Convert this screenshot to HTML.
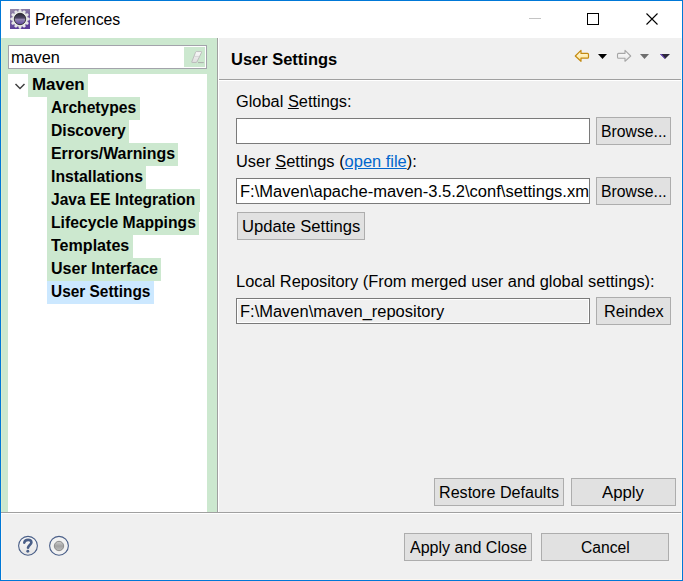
<!DOCTYPE html>
<html><head><meta charset="utf-8">
<style>
*{margin:0;padding:0;box-sizing:border-box}
html,body{width:683px;height:581px;overflow:hidden;background:#fff}
body{position:relative;font-family:"Liberation Sans",sans-serif;color:#000}
.a{position:absolute}
.t{position:absolute;white-space:pre;line-height:16px;font-size:16px;transform-origin:0 0}
.b{font-weight:bold}
.btn{position:absolute;background:#e1e1e1;border:1px solid #adadad;height:28px}
.fld{position:absolute;background:#fff;border:1px solid #7a7a7a;height:26px;width:354px;left:236px;overflow:hidden}
.hl{position:absolute;background:#cce8cf;height:23px}
.lnk{color:#0066cc;text-decoration:underline}
u{text-decoration:underline}
</style></head><body>
<!-- window border -->
<div class="a" style="left:0;top:0;width:683px;height:581px;border:1px solid #0078d7"></div>
<!-- title bar -->
<div class="a" style="left:1px;top:1px;width:681px;height:37px;background:#fff"></div>
<svg class="a" style="left:10px;top:9px" width="20" height="20" viewBox="0 0 20 20">
  <defs><linearGradient id="ig" x1="0" y1="0" x2="0.3" y2="1"><stop offset="0" stop-color="#988ca8"/><stop offset="0.5" stop-color="#7864a0"/><stop offset="1" stop-color="#5b3c98"/></linearGradient>
  <linearGradient id="ic" x1="0" y1="0" x2="0" y2="1"><stop offset="0" stop-color="#2c2838"/><stop offset="0.42" stop-color="#4e4664"/><stop offset="0.52" stop-color="#9488b0"/><stop offset="1" stop-color="#5e44a0"/></linearGradient></defs>
  <rect x="0" y="0" width="20" height="20" fill="url(#ig)"/>
  <polygon points="8.99,0.35 11.01,0.35 11.89,2.95 13.95,1.14 15.70,2.15 15.16,4.84 17.85,4.30 18.86,6.05 17.05,8.11 19.65,8.99 19.65,11.01 17.05,11.89 18.86,13.95 17.85,15.70 15.16,15.16 15.70,17.85 13.95,18.86 11.89,17.05 11.01,19.65 8.99,19.65 8.11,17.05 6.05,18.86 4.30,17.85 4.84,15.16 2.15,15.70 1.14,13.95 2.95,11.89 0.35,11.01 0.35,8.99 2.95,8.11 1.14,6.05 2.15,4.30 4.84,4.84 4.30,2.15 6.05,1.14 8.11,2.95" fill="#e6e6e6"/>
  <circle cx="10" cy="10" r="5.7" fill="url(#ic)" stroke="#1e1e1e" stroke-width="0.8"/>
</svg>
<div class="t" style="left:35.01px;top:12px;transform:scaleX(0.9882)">Preferences</div>
<!-- window controls -->
<div class="a" style="left:529px;top:18px;width:12px;height:1px;background:#c4c4c4"></div>
<div class="a" style="left:587px;top:13px;width:12px;height:12px;border:1px solid #000"></div>
<svg class="a" style="left:645px;top:12px" width="14" height="14" viewBox="0 0 14 14"><path d="M1.5 1.5 L12.5 12.5 M12.5 1.5 L1.5 12.5" stroke="#000" stroke-width="1.1"/></svg>

<!-- left panel -->
<div class="a" style="left:1px;top:38px;width:216px;height:474px;background:#cce8cf"></div>
<div class="a" style="left:217px;top:38px;width:1px;height:474px;background:#a0a0a0"></div>
<div class="a" style="left:218px;top:38px;width:1px;height:474px;background:#fff"></div>
<!-- right panel -->
<div class="a" style="left:219px;top:38px;width:463px;height:474px;background:#f0f0f0"></div>
<div class="a" style="left:219px;top:79px;width:463px;height:1px;background:#a0a0a0"></div>
<svg class="a" style="left:572px;top:46px" width="100" height="20" viewBox="0 0 100 20">
  <defs><linearGradient id="ya" x1="0" y1="0" x2="0" y2="1"><stop offset="0" stop-color="#fffbe6"/><stop offset="1" stop-color="#ffe38a"/></linearGradient>
  <linearGradient id="wa" x1="0" y1="0" x2="0" y2="1"><stop offset="0" stop-color="#ffffff"/><stop offset="1" stop-color="#e4e4e4"/></linearGradient></defs>
  <path d="M3.3 10 L9 4.3 L9 7.4 L15.5 7.4 Q16.5 7.4 16.5 8.4 L16.5 11.2 Q16.5 12.2 15.5 12.2 L9 12.2 L9 15.3 Z" fill="url(#ya)" stroke="#c48a12" stroke-width="1.2" stroke-linejoin="round"/>
  <path d="M26 7.5 L35 7.5 L30.5 12.5 Z" fill="#fff"/>
  <path d="M26 8 L35 8 L30.5 13 Z" fill="#000"/>
  <path d="M58.7 10 L53 4.3 L53 7.4 L46.5 7.4 Q45.5 7.4 45.5 8.4 L45.5 11.2 Q45.5 12.2 46.5 12.2 L53 12.2 L53 15.3 Z" fill="url(#wa)" stroke="#a6a6a6" stroke-width="1.1" stroke-linejoin="round"/>
  <path d="M68 8 L77 8 L72.5 13 Z" fill="#6e6e6e"/>
  <path d="M88 8 L98 8 L93 13 Z" fill="#2c2838"/>
  <path d="M88 8 L89.6 8 L93 12 L93 13 Z" fill="#6a40c8"/>
</svg>
<div class="a" style="left:219px;top:80px;width:463px;height:1px;background:#fff"></div>
<!-- bottom -->
<div class="a" style="left:1px;top:512px;width:681px;height:1px;background:#a0a0a0"></div>
<div class="a" style="left:1px;top:513px;width:681px;height:1px;background:#fff"></div>
<div class="a" style="left:1px;top:514px;width:681px;height:66px;background:#f0f0f0"></div>
<div class="a" style="left:1px;top:514px;width:1px;height:66px;background:#fcf6ef"></div>
<div class="a" style="left:1px;top:579px;width:681px;height:1px;background:#fcf6ef"></div>
<div class="a" style="left:681px;top:38px;width:1px;height:542px;background:#fcf6ef"></div>
<div class="a" style="left:1px;top:38px;width:1px;height:474px;background:#d9edcc"></div>

<!-- search box -->
<div class="a" style="left:8px;top:45px;width:199px;height:24px;background:#fff;border:1px solid #a3a3ab"></div>
<div class="t" style="left:10.68px;top:50px;transform:scaleX(1.0174)">maven</div>
<div class="a" style="left:184px;top:47px;width:21px;height:20px;background:#cce8cf"></div>
<svg class="a" style="left:184px;top:47px" width="21" height="20" viewBox="0 0 21 20">
  <defs><linearGradient id="er" x1="0" y1="0" x2="0" y2="1"><stop offset="0" stop-color="#fafafa"/><stop offset="1" stop-color="#dcdcdc"/></linearGradient></defs>
  <path d="M12.3 4.6 L17.3 4.6 Q17.9 4.6 17.6 5.3 L12.9 15 Q12.6 15.5 12 15.5 L8.2 15.5 Q7.5 15.5 7.8 14.8 L11.6 5.2 Q11.8 4.6 12.3 4.6 Z" fill="url(#er)" stroke="#b9b9b9" stroke-width="0.9"/>
  <path d="M10.2 9.6 L15.3 9.6" stroke="#d0d0d0" stroke-width="0.8"/>
  <path d="M14 15.6 L19.8 15.6" stroke="#a8a8a8" stroke-width="0.9"/>
</svg>

<!-- tree -->
<div class="a" style="left:8px;top:74px;width:199px;height:438px;background:#fff"></div>
<div class="hl" style="left:28px;top:74px;width:60px"></div>
<div class="hl" style="left:47px;top:97px;width:93px"></div>
<div class="hl" style="left:47px;top:120px;width:82px"></div>
<div class="hl" style="left:47px;top:143px;width:131px"></div>
<div class="hl" style="left:47px;top:166px;width:99px"></div>
<div class="hl" style="left:47px;top:189px;width:153px"></div>
<div class="hl" style="left:47px;top:212px;width:152px"></div>
<div class="hl" style="left:47px;top:235px;width:86px"></div>
<div class="hl" style="left:47px;top:258px;width:114px"></div>
<div class="hl" style="left:47px;top:281px;width:107px;background:#cce8ff"></div>
<svg class="a" style="left:14px;top:82px" width="12" height="8" viewBox="0 0 12 8"><path d="M1.5 2 L6 6.5 L10.5 2" fill="none" stroke="#404040" stroke-width="1.5"/></svg>
<div class="t b" style="left:31.64px;top:77px;transform:scaleX(1.0563)">Maven</div>
<div class="t b" style="left:50.72px;top:100px;transform:scaleX(0.9779)">Archetypes</div>
<div class="t b" style="left:50.72px;top:123px;transform:scaleX(0.9773)">Discovery</div>
<div class="t b" style="left:50.71px;top:146px;transform:scaleX(0.9943)">Errors/Warnings</div>
<div class="t b" style="left:50.72px;top:169px;transform:scaleX(0.9848)">Installations</div>
<div class="t b" style="left:50.90px;top:192px;transform:scaleX(0.9709)">Java EE Integration</div>
<div class="t b" style="left:50.72px;top:215px;transform:scaleX(0.9815)">Lifecycle Mappings</div>
<div class="t b" style="left:50.90px;top:238px;transform:scaleX(1.0039)">Templates</div>
<div class="t b" style="left:50.70px;top:261px;transform:scaleX(1.0029)">User Interface</div>
<div class="t b" style="left:50.74px;top:284px;transform:scaleX(0.9637)">User Settings</div>

<!-- right content -->
<div class="t b" style="left:230.97px;top:52px;transform:scaleX(1.0294)">User Settings</div>

<div class="t" style="left:235.68px;top:94px;transform:scaleX(1.0234)">Global <u>S</u>ettings:</div>
<div class="fld" style="top:118px"></div>
<div class="btn" style="left:596px;top:117px;width:75px"></div>
<div class="t" style="left:601.02px;top:124px;transform:scaleX(0.9844)">Browse...</div>

<div class="t" style="left:236.0px;top:154px;transform:scaleX(1.0264)">User <u>S</u>ettings (<span class="lnk">open file</span>):</div>
<div class="fld" style="top:178px"><div class="t" style="left:2.97px;top:5px;transform:scaleX(1.0327)">F:\Maven\apache-maven-3.5.2\conf\settings.xml</div></div>
<div class="btn" style="left:596px;top:177px;width:75px"></div>
<div class="t" style="left:601.02px;top:184px;transform:scaleX(0.9844)">Browse...</div>

<div class="btn" style="left:237px;top:212px;width:128px"></div>
<div class="t" style="left:241.66px;top:219px;transform:scaleX(1.0384)">Update Settings</div>

<div class="t" style="left:235.57px;top:274px;transform:scaleX(1.0256)">Local Repository (From merged user and global settings):</div>
<div class="fld" style="top:298px;background:#f0f0f0;box-shadow:inset 0 0 0 1px #fff"><div class="t" style="left:2.97px;top:5px;transform:scaleX(1.0294)">F:\Maven\maven_repository</div></div>
<div class="btn" style="left:596px;top:297px;width:75px"></div>
<div class="t" style="left:603.78px;top:304px;transform:scaleX(1.0175)">Reindex</div>

<div class="btn" style="left:434px;top:478px;width:130px"></div>
<div class="t" style="left:438.99px;top:485px;transform:scaleX(1.0068)">Restore Defaults</div>
<div class="btn" style="left:571px;top:478px;width:105px"></div>
<div class="t" style="left:602.40px;top:485px;transform:scaleX(1.0475)">Apply</div>

<!-- bottom icons -->
<svg class="a" style="left:16px;top:534px" width="24" height="24" viewBox="0 0 24 24">
  <defs><linearGradient id="hg" x1="0" y1="0" x2="0" y2="1"><stop offset="0" stop-color="#fbfbfb"/><stop offset="1" stop-color="#e4e4e4"/></linearGradient></defs>
  <circle cx="12" cy="11.8" r="9.4" fill="url(#hg)" stroke="#4a5f88" stroke-width="1.1"/>
  <path d="M8.3 8.6 C8.6 6.6 10.2 5.9 12.1 5.9 C14.2 5.9 15.4 7 15.4 8.6 C15.4 10.6 12.4 11 12 13.8" fill="none" stroke="#4a5f88" stroke-width="2.6" stroke-linecap="round"/>
  <circle cx="11.8" cy="17.3" r="1.45" fill="#4a5f88"/>
</svg>
<svg class="a" style="left:47px;top:534px" width="24" height="24" viewBox="0 0 24 24">
  <defs><linearGradient id="rg" x1="0" y1="0" x2="0" y2="1"><stop offset="0" stop-color="#cfcfcf"/><stop offset="0.5" stop-color="#a2a2a2"/><stop offset="1" stop-color="#bdbdbd"/></linearGradient></defs>
  <circle cx="12" cy="11.8" r="9.4" fill="#f2f2f2" stroke="#4a5f88" stroke-width="1.1"/>
  <circle cx="12" cy="12" r="4.7" fill="url(#rg)" stroke="#858585" stroke-width="0.9"/>
</svg>

<div class="btn" style="left:404px;top:533px;width:128px"></div>
<div class="t" style="left:410.00px;top:540px;transform:scaleX(1.0026)">Apply and Close</div>
<div class="btn" style="left:541px;top:533px;width:128px"></div>
<div class="t" style="left:580.62px;top:540px;transform:scaleX(0.9792)">Cancel</div>
</body></html>
